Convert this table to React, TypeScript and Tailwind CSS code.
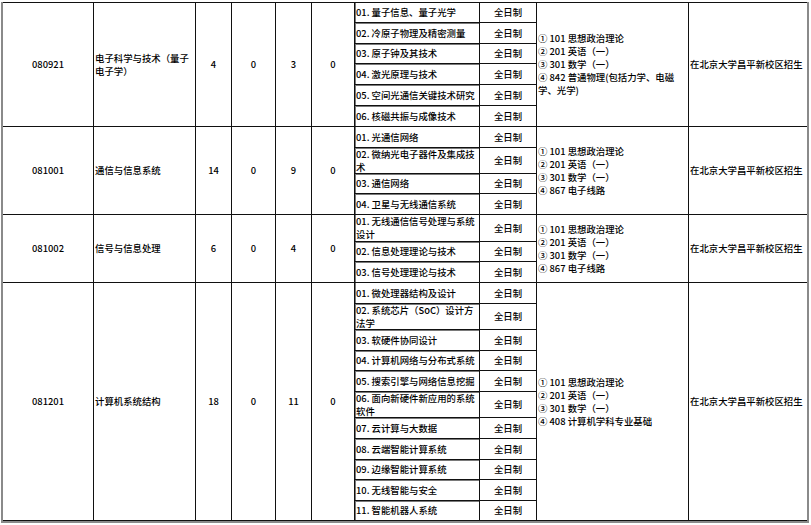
import React from "react";

type Block = {
  code: string;
  name: string[];
  nums: string[];
  dirs: { lines: string[] }[];
  exam: string[][];
  campus: string;
};

const blocks: Block[] = [
  {
    code: "080921",
    name: ["电子科学与技术（量子", "电子学）"],
    nums: ["4", "0", "3", "0"],
    dirs: [
      { lines: ["01. 量子信息、量子光学"] },
      { lines: ["02. 冷原子物理及精密测量"] },
      { lines: ["03. 原子钟及其技术"] },
      { lines: ["04. 激光原理与技术"] },
      { lines: ["05. 空间光通信关键技术研究"] },
      { lines: ["06. 核磁共振与成像技术"] },
    ],
    exam: [
      ["① 101 思想政治理论"],
      ["② 201 英语（一）"],
      ["③ 301 数学（一）"],
      ["④ 842 普通物理(包括力学、电磁", "学、光学)"],
    ],
    campus: "在北京大学昌平新校区招生",
  },
  {
    code: "081001",
    name: ["通信与信息系统"],
    nums: ["14", "0", "9", "0"],
    dirs: [
      { lines: ["01. 光通信网络"] },
      { lines: ["02. 微纳光电子器件及集成技", "术"] },
      { lines: ["03. 通信网络"] },
      { lines: ["04. 卫星与无线通信系统"] },
    ],
    exam: [
      ["① 101 思想政治理论"],
      ["② 201 英语（一）"],
      ["③ 301 数学（一）"],
      ["④ 867 电子线路"],
    ],
    campus: "在北京大学昌平新校区招生",
  },
  {
    code: "081002",
    name: ["信号与信息处理"],
    nums: ["6", "0", "4", "0"],
    dirs: [
      { lines: ["01. 无线通信信号处理与系统", "设计"] },
      { lines: ["02. 信息处理理论与技术"] },
      { lines: ["03. 信号处理理论与技术"] },
    ],
    exam: [
      ["① 101 思想政治理论"],
      ["② 201 英语（一）"],
      ["③ 301 数学（一）"],
      ["④ 867 电子线路"],
    ],
    campus: "在北京大学昌平新校区招生",
  },
  {
    code: "081201",
    name: ["计算机系统结构"],
    nums: ["18", "0", "11", "0"],
    dirs: [
      { lines: ["01. 微处理器结构及设计"] },
      { lines: ["02. 系统芯片（SoC）设计方", "法学"] },
      { lines: ["03. 软硬件协同设计"] },
      { lines: ["04. 计算机网络与分布式系统"] },
      { lines: ["05. 搜索引擎与网络信息挖掘"] },
      { lines: ["06. 面向新硬件新应用的系统", "软件"] },
      { lines: ["07. 云计算与大数据"] },
      { lines: ["08. 云端智能计算系统"] },
      { lines: ["09. 边缘智能计算系统"] },
      { lines: ["10. 无线智能与安全"] },
      { lines: ["11. 智能机器人系统"] },
    ],
    exam: [
      ["① 101 思想政治理论"],
      ["② 201 英语（一）"],
      ["③ 301 数学（一）"],
      ["④ 408 计算机学科专业基础"],
    ],
    campus: "在北京大学昌平新校区招生",
  },
];

// one span class per block, written out so Tailwind picks them up
const spans = ["row-span-6", "row-span-4", "row-span-3", "row-span-11"];

const cell = "bg-white flex items-center";

function Lines({ lines }: { lines: string[] }) {
  return (
    <div className="whitespace-nowrap">
      {lines.map((l, i) => (
        <div key={i}>{l}</div>
      ))}
    </div>
  );
}

export default function App() {
  return (
    <div
      className="w-[811px] h-[525px] bg-white pl-px pt-[2px] text-[9.4px] leading-[13px] font-medium text-black"
      style={{ fontFamily: '"Noto Sans CJK SC", "Noto Sans", sans-serif' }}
    >
      <div className="w-[808px] border-l-2 border-r-2 border-b-2 border-[#8a8a8a]">
        <div className="grid grid-cols-[90px_101px_35px_43px_35px_42px_124px_56px_151px_118px] grid-rows-[19px_20px_19px_20px_20px_20px_20px_25px_19px_20px_26px_19px_20px_20px_25px_20px_19px_20px_25px_20px_20px_19px_20px_19px] gap-px bg-[#111] border-t border-[#111] pb-px">
          {blocks.map((b, bi) => (
            <React.Fragment key={b.code}>
              <div className={`${spans[bi]} ${cell} justify-center`}>{b.code}</div>
              <div className={`${spans[bi]} ${cell} pl-px`}>
                <Lines lines={b.name} />
              </div>
              {b.nums.map((n, ni) => (
                <div key={ni} className={`${spans[bi]} ${cell} justify-center`}>
                  {n}
                </div>
              ))}
              {b.dirs.map((d, di) => (
                <React.Fragment key={di}>
                  <div
                    className={`${cell} pl-px ${
                      di > 0 ? "shadow-[inset_1px_1px_0_#7a7a7a]" : "shadow-[inset_1px_0_0_#7a7a7a]"
                    }`}
                  >
                    <Lines lines={d.lines} />
                  </div>
                  <div className={`${cell} justify-center`}>全日制</div>
                  {di === 0 && (
                    <>
                      <div className={`${spans[bi]} ${cell} pl-px`}>
                        <div className="whitespace-nowrap">
                          {b.exam.map((e, ei) => (
                            <Lines key={ei} lines={e} />
                          ))}
                        </div>
                      </div>
                      <div className={`${spans[bi]} ${cell} pl-px whitespace-nowrap`}>{b.campus}</div>
                    </>
                  )}
                </React.Fragment>
              ))}
            </React.Fragment>
          ))}
        </div>
      </div>
    </div>
  );
}
